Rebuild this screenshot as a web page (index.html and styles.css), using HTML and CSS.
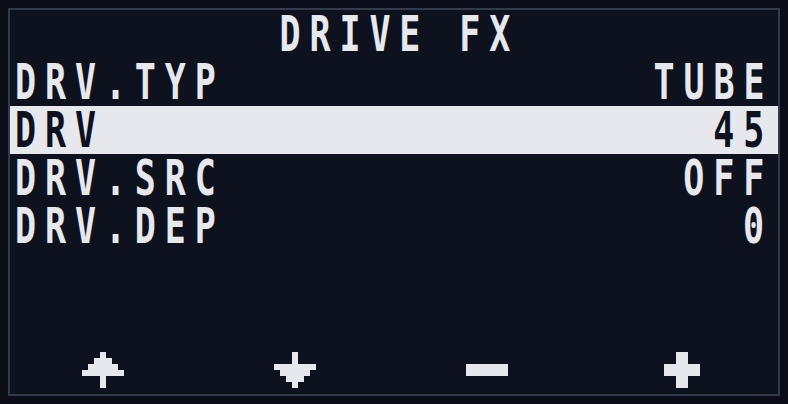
FILE: index.html
```html
<!DOCTYPE html>
<html>
<head>
<meta charset="utf-8">
<link rel="stylesheet" href="styles.css">
</head>
<body>
<div class="screen">
  <div class="title"><span class="txt">DRIVE FX</span></div>
  <div class="menu">
    <div class="row"><span class="txt label">DRV.TYP</span><span class="txt value">TUBE</span></div>
    <div class="row active"><span class="txt label">DRV</span><span class="txt value">45</span></div>
    <div class="row"><span class="txt label">DRV.SRC</span><span class="txt value">OFF</span></div>
    <div class="row"><span class="txt label">DRV.DEP</span><span class="txt value">0</span></div>
  </div>
  <div class="footer">
    <div class="key"><svg class="icon" viewBox="0 0 8 6" width="48" height="36"><path d="M3 0h1v1h1v1h1v1h1v1H4v2H3V4H0V3h1V2h1V1h1z"/></svg></div>
    <div class="key"><svg class="icon" viewBox="0 0 8 6" width="48" height="36"><path d="M3 0h1v2h3v1H6v1H5v1H4v1H3V5H2V4H1V3H0V2h3z"/></svg></div>
    <div class="key"><svg class="icon" viewBox="0 0 8 6" width="48" height="36"><path d="M0 2h7v2H0z"/></svg></div>
    <div class="key"><svg class="icon" viewBox="0 0 8 6" width="48" height="36"><path d="M3 0h2v2h2v2H5v2H3V4H1V2h2z"/></svg></div>
  </div>
</div>
</body>
</html>
```
FILE: styles.css
```css
html, body {
  margin: 0;
  padding: 0;
  background: #0a0d17;
}
body {
  width: 788px;
  height: 404px;
  overflow: hidden;
}
.screen {
  box-sizing: border-box;
  margin: 8px;
  width: 772px;
  height: 388px;
  border: 2px solid #323a4c;
  background: #0e121e;
  display: flex;
  flex-direction: column;
  color: #e7e8ee;
  font-family: "DejaVu Sans Mono", "Liberation Mono", monospace;
  font-weight: bold;
  font-size: 41px;
}
.txt {
  display: inline-block;
  height: 48px;
  letter-spacing: 10.4px;
  white-space: pre;
  transform: scale(0.854, 1.22);
}
.title {
  height: 48px;
  line-height: 48px;
  text-align: center;
  padding-left: 10px;
}
.title .txt {
  transform-origin: center;
}
.menu {
  display: flex;
  flex-direction: column;
}
.row {
  height: 48px;
  line-height: 48px;
  display: flex;
  justify-content: space-between;
  padding: 0 5px 0 5px;
}
.row.active {
  background: #e7e8ee;
  color: #0e121e;
}
.label {
  transform-origin: left center;
}
.value {
  transform-origin: right center;
}
.footer {
  margin-top: auto;
  display: grid;
  grid-template-columns: repeat(4, 1fr);
  padding-bottom: 6px;
}
.key {
  display: flex;
  justify-content: center;
  height: 36px;
}
.icon {
  display: block;
  fill: #e7e8ee;
  shape-rendering: crispEdges;
}
```
